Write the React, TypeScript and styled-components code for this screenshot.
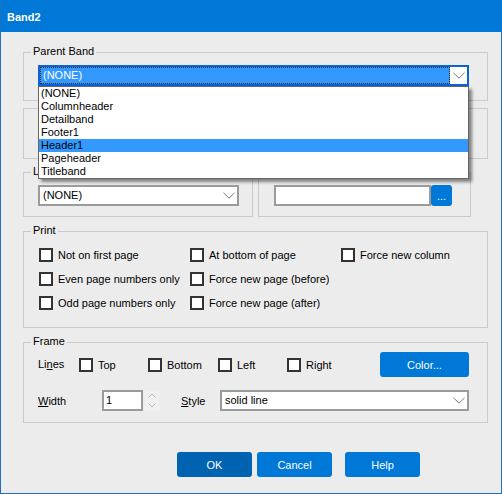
import React from "react";
import styled, { createGlobalStyle } from "styled-components";

const Global = createGlobalStyle`
  html, body { margin: 0; padding: 0; background: #ececec; }
  body { font-family: "Liberation Sans", Arial, sans-serif; font-size: 11px; color: #000; }
  * { box-sizing: border-box; }
`;

const Window = styled.div`
  width: 502px;
  height: 494px;
  border: 1px solid #1f70c1;
  border-top: none;
  background: #ececec;
  display: flex;
  flex-direction: column;
`;

const TitleBar = styled.div`
  height: 32px;
  flex: none;
  background: #0078d7;
  color: #fff;
  font-weight: 600;
  font-size: 11px;
  display: flex;
  align-items: center;
  padding: 1px 0 0 6px;
`;

const Body = styled.div`
  flex: 1;
  padding: 20px 13px 0 22px;
  display: flex;
  flex-direction: column;
`;

const Group = styled.div<{ $h: number; $mt?: number; $w?: number; $pad: string }>`
  position: relative;
  border: 1px solid #cbcbcb;
  height: ${(p) => p.$h}px;
  margin-top: ${(p) => p.$mt ?? 0}px;
  ${(p) => (p.$w ? `width: ${p.$w}px; flex: none;` : "")}
  padding: ${(p) => p.$pad};
`;

const Legend = styled.span`
  position: absolute;
  top: -8px;
  left: 7px;
  padding: 0 2px;
  background: #ececec;
  line-height: 13px;
  white-space: nowrap;
`;

const Row = styled.div<{ $gap?: number; $mt?: number }>`
  display: flex;
  gap: ${(p) => p.$gap ?? 0}px;
  margin-top: ${(p) => p.$mt ?? 0}px;
`;

const ComboWrap = styled.div`
  position: relative;
  width: 431px;
  height: 21px;
`;

const FocusCombo = styled.div`
  height: 21px;
  width: 100%;
  border: 2px solid #0a63d8;
  background: #fff;
  display: flex;
`;

const SelectedText = styled.div`
  flex: 1;
  background: #3399ff;
  color: #fff;
  outline: 1px dotted #3a2a10;
  outline-offset: -1px;
  padding-left: 3px;
  line-height: 17px;
`;

const ArrowBox = styled.div`
  width: 17px;
  flex: none;
  display: flex;
  align-items: center;
  justify-content: center;
`;

const Combo = styled.div<{ $w: number }>`
  width: ${(p) => p.$w}px;
  height: 21px;
  flex: none;
  border: 2px solid #9b9b9b;
  background: #fff;
  display: flex;
  align-items: center;
  padding-left: 3px;
`;

const ComboText = styled.span`
  flex: 1;
  line-height: 17px;
`;

const DropList = styled.div`
  position: absolute;
  top: 21px;
  left: 0;
  width: 431px;
  z-index: 10;
  background: #fff;
  border: 1px solid #646464;
  box-shadow: 3px 3px 3px rgba(0, 0, 0, 0.45);
`;

const DropItem = styled.div<{ $active?: boolean }>`
  height: 13px;
  line-height: 13px;
  padding-left: 2px;
  background: ${(p) => (p.$active ? "#3399ff" : "#fff")};
  white-space: nowrap;
`;

const TextInput = styled.div<{ $w: number }>`
  width: ${(p) => p.$w}px;
  height: 21px;
  flex: none;
  border: 2px solid #9b9b9b;
  background: #fff;
  padding-left: 2px;
  line-height: 17px;
`;

const BlueButton = styled.div<{ $w: number; $h: number; $dark?: boolean; $ml?: number }>`
  width: ${(p) => p.$w}px;
  height: ${(p) => p.$h}px;
  flex: none;
  margin-left: ${(p) => p.$ml ?? 0}px;
  background: ${(p) => (p.$dark ? "#0063b1" : "#0078d7")};
  color: #fff;
  border-radius: 3px;
  display: flex;
  align-items: center;
  justify-content: center;
  font-size: 11px;
`;

const CheckGrid = styled.div`
  display: grid;
  grid-template-columns: 151px 151px 1fr;
  row-gap: 10px;
`;

const CheckItem = styled.div<{ $w?: number }>`
  display: flex;
  align-items: center;
  gap: 5px;
  height: 14px;
  line-height: 14px;
  white-space: nowrap;
  ${(p) => (p.$w ? `width: ${p.$w}px; flex: none;` : "")}
`;

const Box = styled.span`
  width: 14px;
  height: 14px;
  flex: none;
  border: 2px solid #333;
  background: #fff;
`;

const FrameRow = styled.div<{ $h: number; $mt?: number }>`
  display: flex;
  align-items: center;
  height: ${(p) => p.$h}px;
  margin-top: ${(p) => p.$mt ?? 0}px;
`;

const Label = styled.span<{ $w: number; $ml?: number; $dy?: number }>`
  width: ${(p) => p.$w}px;
  flex: none;
  margin-left: ${(p) => p.$ml ?? 0}px;
  position: relative;
  top: ${(p) => p.$dy ?? 0}px;
  white-space: nowrap;
  u { text-underline-offset: 1px; }
`;

const Spinner = styled.div`
  width: 14px;
  height: 20px;
  margin-left: 2px;
  flex: none;
  display: flex;
  flex-direction: column;
`;

const SpinHalf = styled.div`
  flex: 1;
  background: #f0f0f0;
  display: flex;
  align-items: center;
  justify-content: center;
`;

const ButtonRow = styled.div`
  display: flex;
  margin-top: 29px;
  padding-left: 154px;
  gap: 5px;
`;

const Chevron = () => (
  <svg width="12" height="7" viewBox="0 0 12 7">
    <path d="M0.5 0.8 L6 6.2 L11.5 0.8" stroke="#7a7a7a" strokeWidth="1" fill="none" />
  </svg>
);

const SpinArrow = ({ up }: { up?: boolean }) => (
  <svg width="8" height="5" viewBox="0 0 8 5">
    <path d={up ? "M0.5 4.5 L4 1 L7.5 4.5" : "M0.5 0.5 L4 4 L7.5 0.5"} stroke="#b5b5b5" fill="none" />
  </svg>
);

const bands = ["(NONE)", "Columnheader", "Detailband", "Footer1", "Header1", "Pageheader", "Titleband"];

export default function App() {
  return (
    <>
      <Global />
      <Window>
        <TitleBar>Band2</TitleBar>
        <Body>
          <Group $h={49} $pad="12px 0 0 14px">
            <Legend>Parent Band</Legend>
            <ComboWrap>
              <FocusCombo>
                <SelectedText>(NONE)</SelectedText>
                <ArrowBox>
                  <Chevron />
                </ArrowBox>
              </FocusCombo>
              <DropList>
                {bands.map((b) => (
                  <DropItem key={b} $active={b === "Header1"}>
                    {b}
                  </DropItem>
                ))}
              </DropList>
            </ComboWrap>
          </Group>

          <Group $h={51} $mt={7} $pad="0" />

          <Row $gap={5} $mt={13}>
            <Group $h={45} $w={230} $pad="12px 0 0 14px">
              <Legend>L</Legend>
              <Combo $w={201}>
                <ComboText>(NONE)</ComboText>
                <ArrowBox>
                  <Chevron />
                </ArrowBox>
              </Combo>
            </Group>
            <Group $h={45} $w={213} $pad="12px 0 0 15px">
              <Row>
                <TextInput $w={157} />
                <BlueButton $w={21} $h={21}>...</BlueButton>
              </Row>
            </Group>
          </Row>

          <Group $h={97} $mt={14} $pad="16px 0 0 15px">
            <Legend>Print</Legend>
            <CheckGrid>
              <CheckItem><Box />Not on first page</CheckItem>
              <CheckItem><Box />At bottom of page</CheckItem>
              <CheckItem><Box />Force new column</CheckItem>
              <CheckItem><Box />Even page numbers only</CheckItem>
              <CheckItem><Box />Force new page (before)</CheckItem>
              <span />
              <CheckItem><Box />Odd page numbers only</CheckItem>
              <CheckItem><Box />Force new page (after)</CheckItem>
            </CheckGrid>
          </Group>

          <Group $h={81} $mt={14} $pad="9px 0 0 14px">
            <Legend>Frame</Legend>
            <FrameRow $h={25}>
              <Label $w={41} $dy={-1}>
                Li<u>n</u>es
              </Label>
              <CheckItem $w={69}><Box />Top</CheckItem>
              <CheckItem $w={70}><Box />Bottom</CheckItem>
              <CheckItem $w={69}><Box />Left</CheckItem>
              <CheckItem $w={93}><Box />Right</CheckItem>
              <BlueButton $w={89} $h={25}>Color...</BlueButton>
            </FrameRow>
            <FrameRow $h={21} $mt={13}>
              <Label $w={64}>
                <u>W</u>idth
              </Label>
              <TextInput $w={41}>1</TextInput>
              <Spinner>
                <SpinHalf><SpinArrow up /></SpinHalf>
                <SpinHalf><SpinArrow /></SpinHalf>
              </Spinner>
              <Label $w={39} $ml={22}>
                <u>S</u>tyle
              </Label>
              <Combo $w={249}>
                <ComboText>solid line</ComboText>
                <ArrowBox>
                  <Chevron />
                </ArrowBox>
              </Combo>
            </FrameRow>
          </Group>

          <ButtonRow>
            <BlueButton $w={75} $h={25} $dark>OK</BlueButton>
            <BlueButton $w={75} $h={25}>Cancel</BlueButton>
            <BlueButton $w={75} $h={25} $ml={8}>Help</BlueButton>
          </ButtonRow>
        </Body>
      </Window>
    </>
  );
}
